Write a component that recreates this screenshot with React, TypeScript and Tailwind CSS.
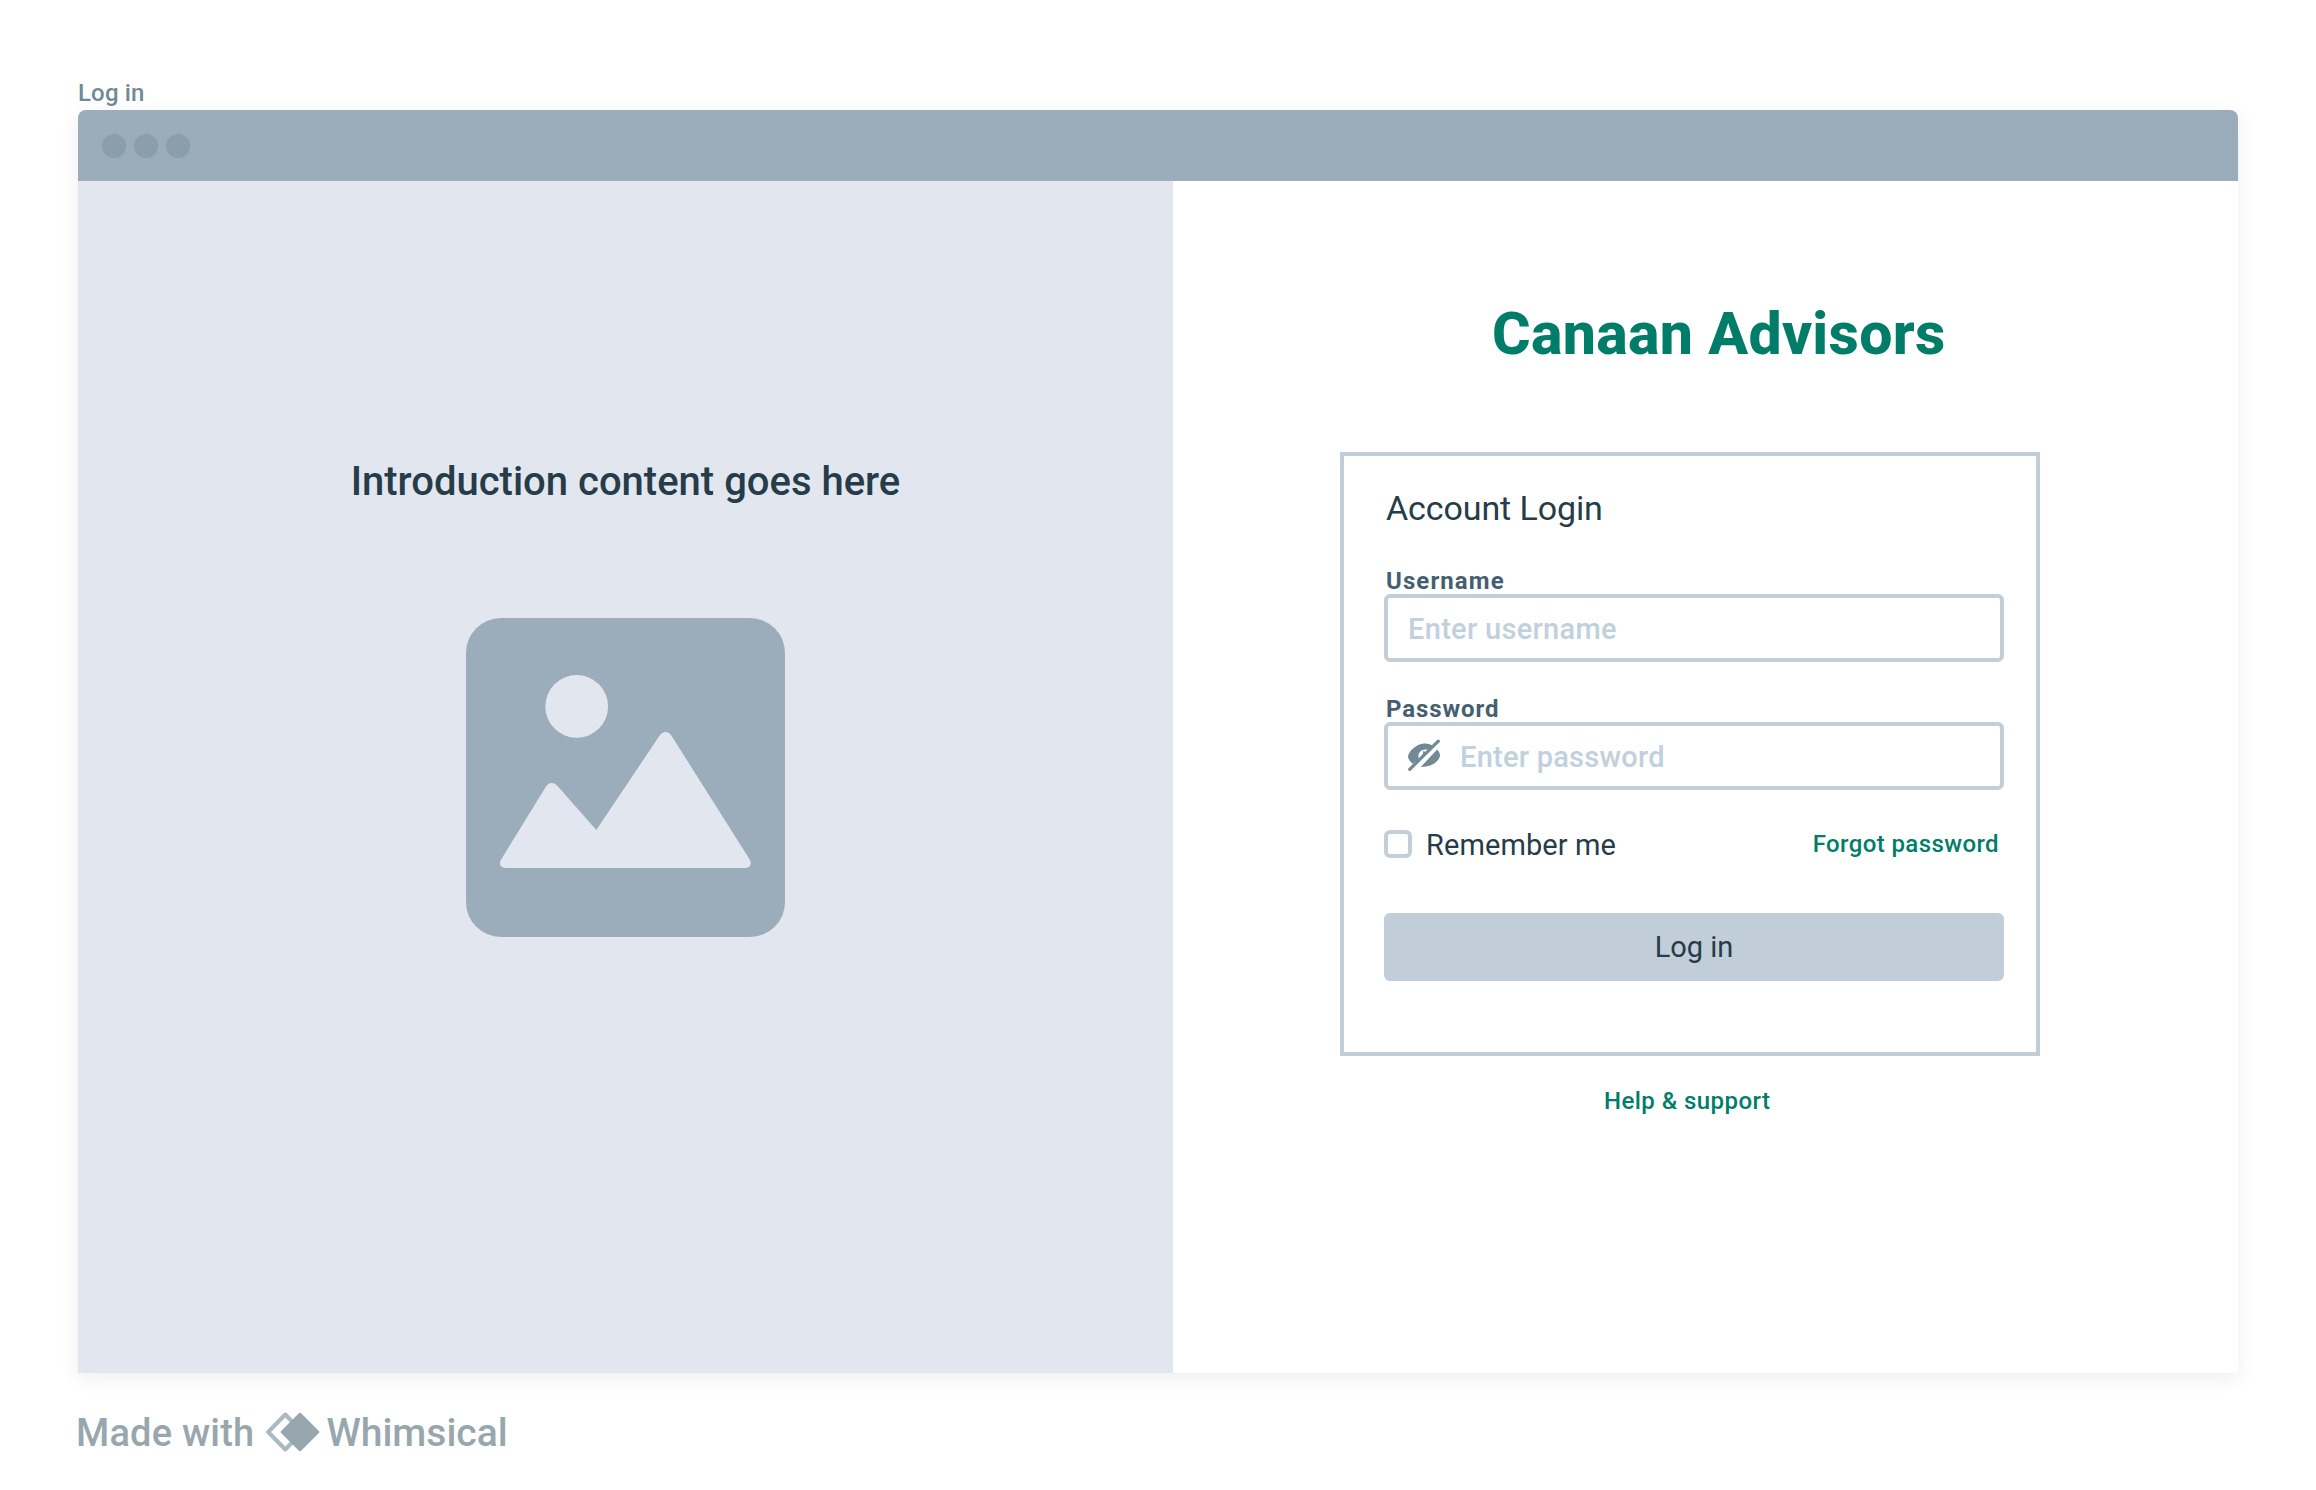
function ImagePlaceholder() {
  return (
    <svg className="block h-[319px] w-[319px]" viewBox="0 0 319 319" aria-hidden="true">
      <rect width="319" height="319" rx="35" fill="#9badba" />
      <circle cx="110.700" cy="88.400" r="31.400" fill="#e2e7ef" />
      <path
        d="M34.800 242L80 168.500C83 164 88 164 91.500 168L130.300 212L194 117C197 113 202 113 205 117L284 242C286.500 246.500 283 250 279 250H39.500C35 250 32.500 246 34.800 242Z"
        fill="#e2e7ef"
      />
    </svg>
  );
}

function EyeOff() {
  return (
    <svg className="block h-8 w-8" viewBox="0 0 32 32" aria-hidden="true">
      <path
        fill="#728996"
        d="M4.500 24.700C1.500 22 0 19.500 0 17.500C0 13 8 5 16 4.500C19 4.300 22 5 24.500 6.500L20 12.500L10.800 20.500Z"
      />
      <path fill="#ffffff" d="M10.800 19.500C9 13.500 14 9 20.200 10.800L17.800 13.200C16.800 12.400 15.800 12.100 14.600 12.300C15.600 13.600 15 15.200 13.600 16.900Z" />
      <path fill="#728996" d="M29.200 10.500C31 12.500 32 14.500 32 16.500C32 21 24.500 28.300 12.800 27.900Z" />
      <path d="M1.700 30.300L30.300 2.200" stroke="#728996" strokeWidth="3.200" strokeLinecap="round" />
    </svg>
  );
}

function WhimsicalMark() {
  return (
    <svg className="block h-10 w-[54px]" viewBox="0 0 54 40" aria-hidden="true">
      <path
        d="M19.300 2.500L2.200 20L19.300 37.500L36 20Z"
        fill="none"
        stroke="#adb9c0"
        strokeWidth="4"
        strokeLinejoin="round"
      />
      <path
        d="M34 2L52 20L34 38L16 20Z"
        fill="#98a7ae"
        stroke="#98a7ae"
        strokeWidth="2.500"
        strokeLinejoin="round"
      />
    </svg>
  );
}

function IntroPanel() {
  return (
    <section className="flex w-[1095px] shrink-0 flex-col items-center bg-[#e2e7ef] pt-[277px]">
      <h2 className="h-12 whitespace-nowrap text-[40px] leading-12 font-medium text-[#273c49]">
        Introduction content goes here
      </h2>
      <div className="mt-[112px]">
        <ImagePlaceholder />
      </div>
    </section>
  );
}

function LoginCard() {
  return (
    <form className="flex h-[604px] w-[700px] flex-col border-4 border-[#c1ceda] px-10 pt-8">
      <h3 className="ml-0.5 h-10 text-[34px] leading-10 tracking-[-0.1px] text-[#273c49]">Account Login</h3>

      <label className="mt-[35px] ml-0.5 h-8 pt-[3px] text-2xl leading-[30px] font-bold tracking-[1.100px] text-[#465f70]">
        Username
      </label>
      <div className="mt-[-1px] flex h-[68px] w-[620px] shrink-0 items-center rounded-md border-4 border-[#c4ced7] pt-0.5 pl-5 text-[29px] leading-9 font-medium tracking-[0.300px] text-[#c1d0dd]">
        Enter username
      </div>

      <label className="mt-[29px] ml-0.5 h-8 pt-0.5 text-2xl leading-8 font-bold tracking-[0.900px] text-[#465f70]">
        Password
      </label>
      <div className="mt-[-1px] flex h-[68px] w-[620px] shrink-0 items-center rounded-md border-4 border-[#c4ced7] pl-5 text-[29px] leading-9 font-medium tracking-[0.250px] text-[#c1d0dd]">
        <div className="mb-0.5">
          <EyeOff />
        </div>
        <span className="mt-0.5 ml-5">Enter password</span>
      </div>

      <div className="mt-10 flex h-7 w-[620px] shrink-0 items-center">
        <span className="h-7 w-7 rounded-md border-4 border-[#c4ced7]" />
        <span className="mt-0.5 ml-3.5 text-[29px] leading-8 tracking-[0.100px] text-[#273c49]">Remember me</span>
        <a className="mr-[5px] ml-auto text-2xl leading-7 font-medium tracking-[0.400px] text-[#007d69]">
          Forgot password
        </a>
      </div>

      <button
        type="button"
        className="mt-[55px] flex h-[68px] w-[620px] shrink-0 items-center justify-center rounded-md bg-[#c1ceda] pt-0.5 text-[29px] text-[#273c49]"
      >
        Log in
      </button>
    </form>
  );
}

function LoginPanel() {
  return (
    <section className="flex flex-1 flex-col bg-white pt-[115px] pl-[167px]">
      <h1 className="ml-[152px] h-[76px] whitespace-nowrap text-[59px] leading-[76px] font-extrabold tracking-[0.300px] text-[#007d69]">
        Canaan Advisors
      </h1>
      <div className="mt-20">
        <LoginCard />
      </div>
      <a className="mt-[29px] ml-[264px] h-8 text-2xl leading-8 font-medium tracking-[0.450px] text-[#007d69]">
        Help &amp; support
      </a>
    </section>
  );
}

export default function App() {
  return (
    <main className="flex h-[1490px] w-[2316px] flex-col overflow-hidden bg-white pt-[79px] pl-[78px] font-[Roboto,sans-serif]">
      <p className="h-[31px] text-2xl leading-7 font-medium tracking-[0.150px] text-[#728996]">Log in</p>

      <div className="flex h-[1263px] w-[2160px] flex-col overflow-hidden rounded-t-lg shadow-[0_5px_20px_rgba(0,0,0,0.07)]">
        <header className="flex h-[71px] shrink-0 items-center gap-2 bg-[#9badba] pl-6">
          <span className="h-6 w-6 rounded-full bg-[#8b9eac]" />
          <span className="h-6 w-6 rounded-full bg-[#8b9eac]" />
          <span className="h-6 w-6 rounded-full bg-[#8b9eac]" />
        </header>
        <div className="flex flex-1">
          <IntroPanel />
          <LoginPanel />
        </div>
      </div>

      <footer className="-ml-0.5 mt-[38px] flex h-11 items-center font-medium text-[#98a7ae]">
        <span className="text-[38px] tracking-[0.200px]">Made with</span>
        <span className="mb-0.5 ml-3">
          <WhimsicalMark />
        </span>
        <span className="ml-1.5 text-[39px]">Whimsical</span>
      </footer>
    </main>
  );
}
